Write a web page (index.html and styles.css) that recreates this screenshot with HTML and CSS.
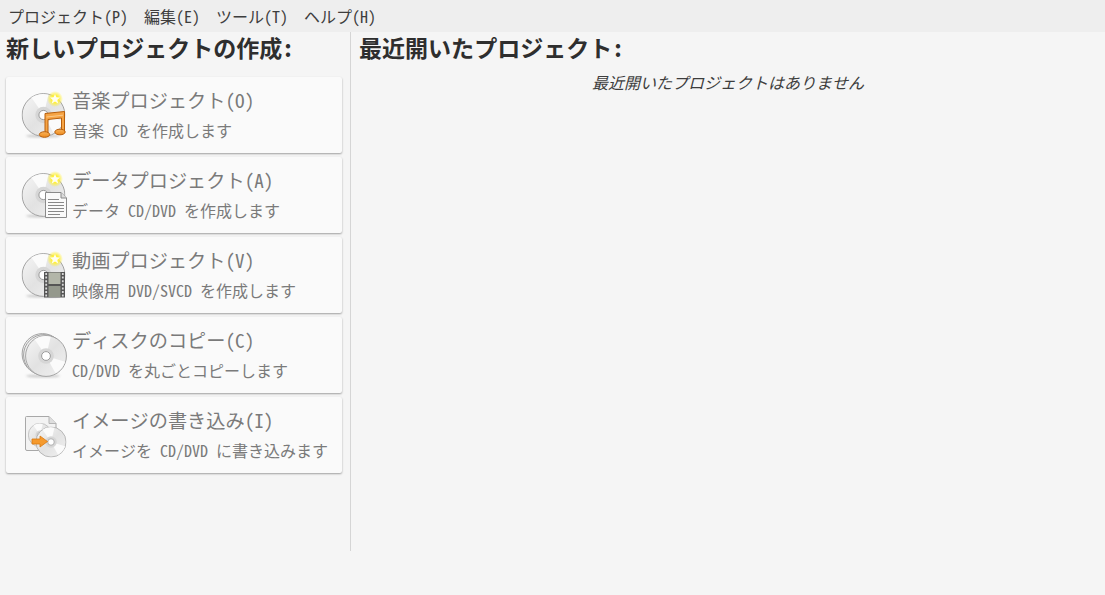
FILE: index.html
```html
<!DOCTYPE html>
<html lang="ja">
<head>
  <meta charset="UTF-8" />
  <title>Brasero</title>
  <link rel="stylesheet" href="styles.css">
</head>
<body>
  <!-- shared icon parts -->
  <svg class="defs" width="0" height="0" aria-hidden="true">
    <defs>
      <linearGradient id="discFill" x1="0" y1="0" x2="1" y2="1">
        <stop offset="0" stop-color="#f6f6f6" />
        <stop offset="0.5" stop-color="#e2e2e2" />
        <stop offset="1" stop-color="#f2f2f2" />
      </linearGradient>
      <linearGradient id="noteFill" x1="0" y1="0" x2="0" y2="1">
        <stop offset="0" stop-color="#f9b45c" />
        <stop offset="1" stop-color="#ee8a1c" />
      </linearGradient>
      <radialGradient id="starGlow">
        <stop offset="0.45" stop-color="#fff03a" />
        <stop offset="1" stop-color="#fff03a" stop-opacity="0" />
      </radialGradient>
      <filter id="soft" x="-20%" y="-50%" width="140%" height="200%">
        <feGaussianBlur stdDeviation="1.2" />
      </filter>
      <symbol id="disc" viewBox="0 0 44 44">
        <circle cx="22" cy="22" r="21.4" fill="url(#discFill)" stroke="#a2a2a2" stroke-width="1" />
        <path d="M22 22 L10 4.5 A21 21 0 0 1 27 1.8 Z" fill="#fbfbfb" />
        <path d="M22 22 L42 28 A21 21 0 0 1 32 40 Z" fill="#fbfbfb" />
        <circle cx="22" cy="22" r="8.2" fill="#d6d6d6" />
        <circle cx="22" cy="22" r="4.6" fill="#fff" stroke="#999" stroke-width="1" />
      </symbol>
      <symbol id="star" viewBox="0 0 16 16">
        <circle cx="8" cy="8" r="8" fill="url(#starGlow)" />
        <path d="M8 3 L9.4 6.2 L13 6.5 L10.3 8.9 L11.2 12.4 L8 10.5 L4.8 12.4 L5.7 8.9 L3 6.5 L6.6 6.2 Z" fill="#fffef0" />
      </symbol>
    </defs>
  </svg>

  <nav class="menubar">
    <span class="menu-item">プロジェクト(P)</span>
    <span class="menu-item">編集(E)</span>
    <span class="menu-item">ツール(T)</span>
    <span class="menu-item">ヘルプ(H)</span>
  </nav>

  <main class="content">
    <section class="new-project">
      <h2 class="heading">新しいプロジェクトの作成:</h2>
      <div class="card-list">

        <div class="card">
          <svg class="card-icon" width="48" height="48" viewBox="0 0 48 48">
            <ellipse cx="23" cy="45" rx="17" ry="1.6" fill="#999" opacity="0.45" filter="url(#soft)" />
            <use href="#disc" x="1.5" y="2" width="44" height="44" />
            <use href="#star" x="27" y="0" width="16" height="16" />
            <path d="M25 22.5 L44.5 20.5 V41 H41.5 V27 L28 28.5 V43 H25 Z" fill="#f6a444" stroke="#b85f0c" stroke-linejoin="round" />
            <path d="M26.5 26 L43 24.2" stroke="#fbc98a" stroke-width="1" />
            <ellipse cx="24.5" cy="43.5" rx="5.2" ry="2.8" fill="url(#noteFill)" stroke="#b85f0c" />
            <ellipse cx="40" cy="41" rx="5.2" ry="2.8" fill="url(#noteFill)" stroke="#b85f0c" />
          </svg>
          <div class="card-text">
            <span class="card-title">音楽プロジェクト(O)</span>
            <span class="card-desc">音楽 CD を作成します</span>
          </div>
        </div>

        <div class="card">
          <svg class="card-icon" width="48" height="48" viewBox="0 0 48 48">
            <ellipse cx="23" cy="45" rx="17" ry="1.6" fill="#999" opacity="0.45" filter="url(#soft)" />
            <use href="#disc" x="1.5" y="2" width="44" height="44" />
            <use href="#star" x="27" y="0" width="16" height="16" />
            <path d="M25.5 21.5 H41 L46.5 27 V46.5 H25.5 Z" fill="#fafafa" stroke="#8a8a8a" />
            <path d="M41 21.5 V27 H46.5" fill="#ddd" stroke="#8a8a8a" />
            <path d="M28 28.5 H39 M28 31.5 H44 M28 34.5 H44 M28 37.5 H44 M28 40.5 H44 M28 43.5 H40" stroke="#888" stroke-width="1" />
          </svg>
          <div class="card-text">
            <span class="card-title">データプロジェクト(A)</span>
            <span class="card-desc">データ CD/DVD を作成します</span>
          </div>
        </div>

        <div class="card">
          <svg class="card-icon" width="48" height="48" viewBox="0 0 48 48">
            <ellipse cx="23" cy="45" rx="17" ry="1.6" fill="#999" opacity="0.45" filter="url(#soft)" />
            <use href="#disc" x="1.5" y="2" width="44" height="44" />
            <use href="#star" x="27" y="0" width="16" height="16" />
            <rect x="24" y="21" width="21" height="25.5" fill="#555" />
            <rect x="28.5" y="21.5" width="12" height="11.5" fill="#b3b6a9" />
            <rect x="28.5" y="35" width="12" height="11" fill="#94988c" />
            <path d="M26.2 22 V46 M42.8 22 V46" stroke="#d8d8d8" stroke-width="1.8" stroke-dasharray="2 1.6" />
          </svg>
          <div class="card-text">
            <span class="card-title">動画プロジェクト(V)</span>
            <span class="card-desc">映像用 DVD/SVCD を作成します</span>
          </div>
        </div>

        <div class="card">
          <svg class="card-icon" width="48" height="48" viewBox="0 0 48 48">
            <ellipse cx="23" cy="45" rx="17" ry="1.6" fill="#999" opacity="0.45" filter="url(#soft)" />
            <circle cx="22.5" cy="23" r="20.4" fill="#f0f0f0" stroke="#a2a2a2" />
            <circle cx="24" cy="24" r="20.4" fill="#f0f0f0" stroke="#a2a2a2" />
            <use href="#disc" x="5" y="4" width="42" height="42" />
          </svg>
          <div class="card-text">
            <span class="card-title">ディスクのコピー(C)</span>
            <span class="card-desc">CD/DVD を丸ごとコピーします</span>
          </div>
        </div>

        <div class="card">
          <svg class="card-icon" width="48" height="48" viewBox="0 0 48 48">
            <path d="M5.5 6.5 Q5.5 5.5 6.5 5.5 H29 L36 12.5 V38 Q36 39.5 35 39.5 H7 Q5.5 39.5 5.5 38 Z" fill="#f3f3f3" stroke="#a8a8a8" />
            <path d="M29 5.5 V12.5 H36" fill="#dedede" stroke="#b5b5b5" />
            <use href="#disc" x="8" y="12" width="24" height="24" />
            <use href="#disc" x="15.5" y="15.5" width="31" height="31" />
            <path d="M12 28 H20 V25 L27.5 30.5 L20 36 V33 H12 Z" fill="#f59a2e" stroke="#d9780f" stroke-width="0.8" />
          </svg>
          <div class="card-text">
            <span class="card-title">イメージの書き込み(I)</span>
            <span class="card-desc">イメージを CD/DVD に書き込みます</span>
          </div>
        </div>

      </div>
    </section>

    <section class="recent">
      <h2 class="heading">最近開いたプロジェクト:</h2>
      <p class="recent-empty">最近開いたプロジェクトはありません</p>
    </section>
  </main>
</body>
</html>
```

FILE: styles.css
```css
/* whole window */
body {
  margin: 0;
  height: 595px;
  overflow: hidden;
  background-color: #f5f5f5;
  color: #333;
  font-family: "Noto Sans Mono CJK JP", "Noto Sans CJK JP", monospace;
}

.defs {
  position: absolute;
}

/* top menu */
.menubar {
  display: flex;
  gap: 16px;
  height: 32px;
  padding-left: 8px;
  padding-bottom: 1px;
  box-sizing: border-box;
  align-items: center;
  background-color: #eeeeee;
  font-size: 16px;
  color: #3d3d3d;
}

/* two panels under the menu */
.content {
  display: flex;
  height: 519px;
}

.new-project {
  width: 344px;
  flex: none;
  padding-left: 6px;
  border-right: 1px solid #d5d5d5;
}

.recent {
  flex: 1;
  padding-left: 8px;
}

.heading {
  margin: 0;
  height: 34px;
  line-height: 30px;
  font-size: 23.04px;
  font-weight: bold;
  color: #2e2e2e;
}

/* project buttons */
.card-list {
  display: flex;
  flex-direction: column;
  gap: 4px;
  margin-top: 11px;
  width: 336px;
}

.card {
  display: flex;
  align-items: center;
  gap: 4px;
  height: 76px;
  padding-left: 14px;
  box-sizing: border-box;
  background-color: #fafafa;
  border-radius: 2px;
  box-shadow: 0 1px 2px rgba(0, 0, 0, 0.35);
  color: #7a7a7a;
}

.card-icon {
  flex: none;
}

.card-text {
  display: flex;
  flex-direction: column;
  gap: 8px;
  padding-bottom: 3px;
}

.card-title {
  font-size: 19.2px;
  line-height: 24px;
}

.card-desc {
  font-size: 16px;
  line-height: 20px;
}

/* empty list message */
.recent-empty {
  margin: 4px 0 0 -8px;
  text-align: center;
  font-size: 16px;
  line-height: 24px;
  font-style: italic;
  color: #3d3d3d;
}
```
